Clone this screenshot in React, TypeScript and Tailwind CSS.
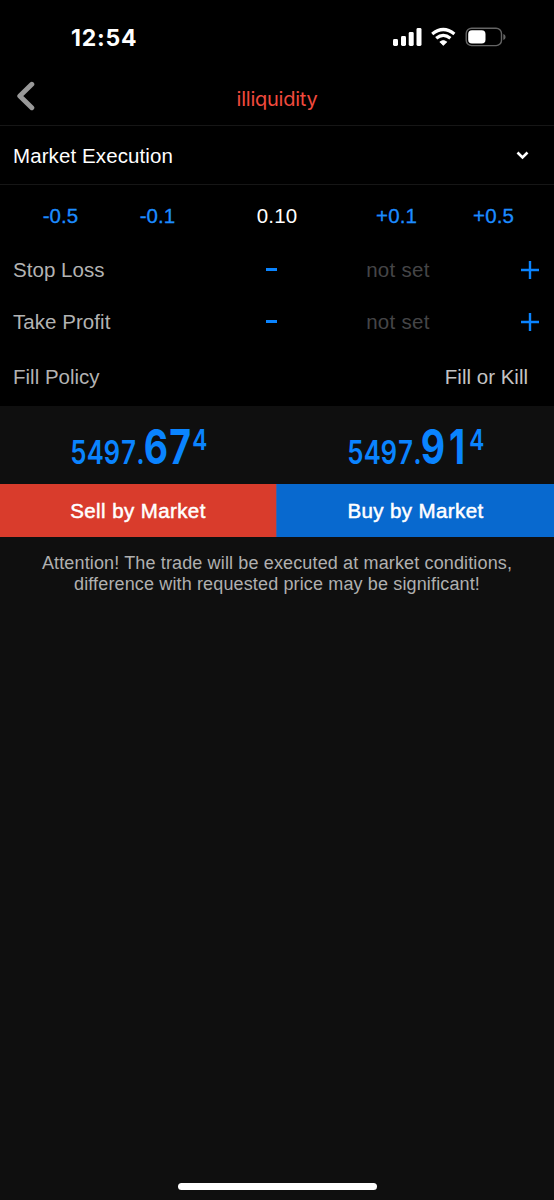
import { clsx } from "clsx";

const VOLUME_STEPS = [
  { label: "-0.5", step: true },
  { label: "-0.1", step: true },
  { label: "0.10", step: false },
  { label: "+0.1", step: true },
  { label: "+0.5", step: true },
];

interface PriceProps {
  main: string;
  big: string;
  pip: string;
}

function StatusBar() {
  return (
    <div className="flex h-[72px] items-center justify-between pl-[71px] pr-[48px]">
      <span className="mt-[3px] font-['Inter',sans-serif] text-[23px] font-bold leading-7 tracking-[0.8px] text-white">
        12:54
      </span>
      <svg width="113" height="20" viewBox="0 0 113 20" className="mt-[2px]">
        <g fill="#fff">
          <rect x="0" y="12" width="5" height="7" rx="1.4" />
          <rect x="8" y="9" width="5" height="10" rx="1.4" />
          <rect x="15.7" y="5" width="5" height="14" rx="1.4" />
          <rect x="23.5" y="1" width="5" height="18" rx="1.4" />
          <path d="M50.3 18.4 L46.8 14.9 Q50.3 12 53.8 14.9 Z" stroke="#fff" strokeWidth="0.8" strokeLinejoin="round" />
        </g>
        <g fill="none" stroke="#fff" strokeWidth="3.2">
          <path d="M39.2 7 Q50.3 -2 61.4 7" />
          <path d="M43.2 11.3 Q50.3 5.3 57.4 11.3" />
        </g>
        <rect x="73.2" y="1.2" width="35.3" height="17.4" rx="5.4" fill="none" stroke="#646464" strokeWidth="1.4" />
        <rect x="75.2" y="3.2" width="17.3" height="13.3" rx="3.8" fill="#fff" />
        <path d="M110.3 7 Q112.6 7.6 112.6 10 Q112.6 12.4 110.3 13 Z" fill="#646464" />
      </svg>
    </div>
  );
}

function Header() {
  return (
    <header className="grid h-[54px] grid-cols-[60px_1fr_60px] items-center border-b border-[#161616]">
      <button type="button" aria-label="Back" className="pb-[5px] pl-[16px]">
        <svg width="20" height="30" viewBox="0 0 20 30" className="block">
          <path
            d="M15.8 3.3 L3.8 15 L15.8 26.7"
            fill="none"
            stroke="#999"
            strokeWidth="5"
            strokeLinecap="round"
            strokeLinejoin="round"
          />
        </svg>
      </button>
      <h1 className="text-center font-['Inter',sans-serif] text-[20px] leading-6 tracking-[-0.25px] text-[#f04a3e]">
        illiquidity
      </h1>
    </header>
  );
}

function LevelRow({ label, className }: { label: string; className: string }) {
  return (
    <div className={clsx("flex items-center", className)}>
      <span className="w-[252px] pl-[13px] tracking-[0.05px]">{label}</span>
      <button type="button" aria-label={`Decrease ${label}`} className="flex w-[38px] justify-center pb-[1px]">
        <span className="h-[3px] w-[11px] bg-[#0a84ff]" />
      </button>
      <span className="flex-1 text-center tracking-[0.3px] text-[#454547]">not set</span>
      <button type="button" aria-label={`Increase ${label}`} className="flex w-[48px] justify-center">
        <svg width="18" height="18" viewBox="0 0 18 18" className="block">
          <path d="M9 0 V18 M0 9 H18" stroke="#0a84ff" strokeWidth="2.4" />
        </svg>
      </button>
    </div>
  );
}

function Price({ main, big, pip }: PriceProps) {
  return (
    <div className="flex flex-1 justify-center pt-[3px]">
      <div className="flex origin-center scale-x-[0.78] items-baseline font-['Inter',sans-serif] font-semibold leading-none text-[#0a84ff]">
        <span className="text-[33px] tabular-nums">{main}</span>
        <span className="flex text-[48px] font-bold">
          {big.split("").map((digit) => (
            <span key={digit} className="w-[31px] text-center">
              {digit}
            </span>
          ))}
        </span>
        <span className="relative -top-[14px] text-[29px]">{pip}</span>
      </div>
    </div>
  );
}

export default function App() {
  return (
    <div className="flex h-[1200px] w-[554px] flex-col overflow-hidden bg-[#0f0f0f] font-['Liberation_Sans',Arial,sans-serif] text-[20.5px] leading-6">
      <div className="h-[406px] bg-black text-[#b3b3b3]">
        <StatusBar />
        <Header />
        <div className="flex h-[59px] items-center justify-between border-b border-[#161616] pl-[13px] pr-[25px] text-white">
          <span className="pt-[2px] tracking-[0.1px]">Market Execution</span>
          <svg width="13" height="9" viewBox="0 0 13 9" className="block">
            <path d="M1.5 1.5 L6.5 6.5 L11.5 1.5" fill="none" stroke="#fff" strokeWidth="2.6" />
          </svg>
        </div>
        <div className="grid h-[62px] grid-cols-[97px_97px_142px_97px_97px] items-center px-[12px] text-center tracking-[0.1px]">
          {VOLUME_STEPS.map(({ label, step }) => (
            <span
              key={label}
              className={step ? "text-[#1c8cff] [-webkit-text-stroke:0.3px_#1c8cff]" : "text-white"}
            >
              {label}
            </span>
          ))}
        </div>
        <LevelRow label="Stop Loss" className="h-[46px]" />
        <LevelRow label="Take Profit" className="h-[57px]" />
        <div className="flex h-[54px] items-center justify-between pl-[13px] pr-[26px]">
          <span>Fill Policy</span>
          <span className="text-[#c4c4c4]">Fill or Kill</span>
        </div>
      </div>

      <div className="flex h-[78px] items-center">
        <Price main="5497." big="67" pip="4" />
        <Price main="5497." big="91" pip="4" />
      </div>
      <div className="flex h-[53px] tracking-[0.4px] text-white [-webkit-text-stroke:0.5px_#fff]">
        <button type="button" className="w-[276px] bg-[#d93c2c]">
          Sell by Market
        </button>
        <button type="button" className="flex-1 border-l border-[#4a5fa0] bg-[#0869cf]">
          Buy by Market
        </button>
      </div>
      <p className="mt-[16px] text-center text-[18px] leading-[21px] tracking-[0.14px] text-[#b0b0b0]">
        Attention! The trade will be executed at market conditions,
        <br />
        difference with requested price may be significant!
      </p>
      <div className="mx-auto mb-[10px] mt-auto h-[7px] w-[199px] rounded-full bg-white" />
    </div>
  );
}
